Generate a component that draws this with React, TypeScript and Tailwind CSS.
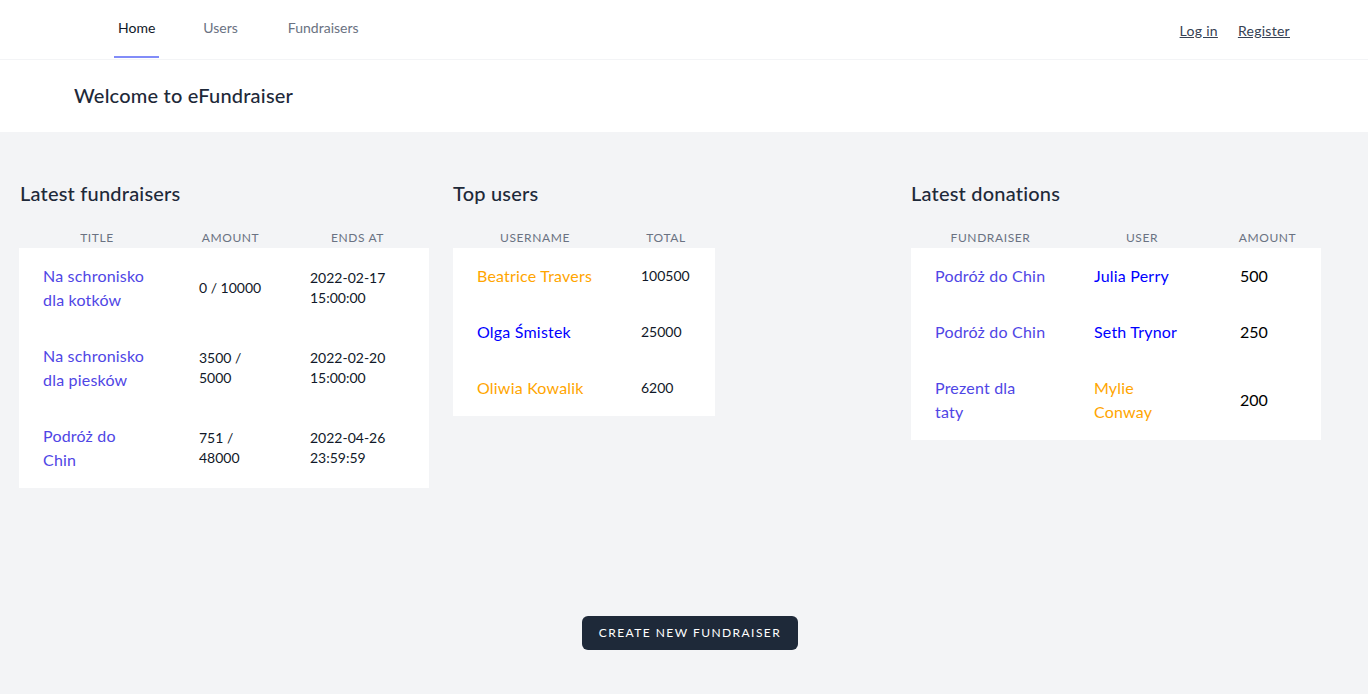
import React from "react";

const fundraisers = [
  { title: "Na schronisko dla kotków", amount: "0 / 10000", ends: "2022-02-17 15:00:00" },
  { title: "Na schronisko dla piesków", amount: "3500 / 5000", ends: "2022-02-20 15:00:00" },
  { title: "Podróż do Chin", amount: "751 / 48000", ends: "2022-04-26 23:59:59" },
];

const users = [
  { name: "Beatrice Travers", total: "100500", color: "text-[#ffa500]" },
  { name: "Olga Śmistek", total: "25000", color: "text-[#0000ff]" },
  { name: "Oliwia Kowalik", total: "6200", color: "text-[#ffa500]" },
];

const donations = [
  { fundraiser: "Podróż do Chin", user: "Julia Perry", amount: "500", color: "text-[#0000ff]" },
  { fundraiser: "Podróż do Chin", user: "Seth Trynor", amount: "250", color: "text-[#0000ff]" },
  { fundraiser: "Prezent dla taty", user: "Mylie Conway", amount: "200", color: "text-[#ffa500]" },
];

function Th({ children }: { children: React.ReactNode }) {
  return (
    <th className="px-6 py-[2px] text-xs font-normal uppercase tracking-wider text-gray-500 text-center">
      {children}
    </th>
  );
}

export default function App() {
  return (
    <div
      className="min-h-screen bg-[#f3f4f6]"
      style={{ fontFamily: "Lato, 'Noto Sans', sans-serif" }}
    >
      {/* nav */}
      <nav className="bg-white border-b border-gray-100 h-[60px] flex justify-between">
        <div className="flex h-full pl-[114px] gap-10">
          <a className="flex items-center h-[58px] px-1 border-b-2 border-[#818cf8] text-sm text-gray-900">
            Home
          </a>
          <a className="flex items-center h-[58px] px-1 border-b-2 border-transparent text-sm text-gray-500">
            Users
          </a>
          <a className="flex items-center h-[58px] px-1 ml-[2px] border-b-2 border-transparent text-sm text-gray-500">
            Fundraisers
          </a>
        </div>
        <div className="flex items-center gap-5 pr-[78px] pt-[2px]">
          <a className="text-sm text-gray-700 underline tracking-[0.02em]">Log in</a>
          <a className="text-sm text-gray-700 underline tracking-[0.02em]">Register</a>
        </div>
      </nav>

      {/* header */}
      <header className="bg-white">
        <div className="pl-[74px] pt-[21px] pb-[23px]">
          <h2 className="text-xl leading-7 font-medium text-gray-800 tracking-[0.01em]">Welcome to eFundraiser</h2>
        </div>
      </header>

      <main className="pt-[47px]">
        <div className="flex items-start pl-[19px]">
          {/* latest fundraisers */}
          <section className="w-[410px]">
            <h3 className="text-xl leading-7 font-medium text-gray-800 pl-px mb-[21px] tracking-[0.01em]">
              Latest fundraisers
            </h3>
            <table className="w-full table-fixed">
              <colgroup>
                <col className="w-[156px]" />
                <col className="w-[111px]" />
                <col />
              </colgroup>
              <thead>
                <tr>
                  <Th>Title</Th>
                  <Th>Amount</Th>
                  <Th>Ends at</Th>
                </tr>
              </thead>
              <tbody className="bg-white">
                {fundraisers.map((f) => (
                  <tr key={f.title}>
                    <td className="px-6 py-4 text-base leading-6 tracking-[0.2px] text-[#4f46e5]">{f.title}</td>
                    <td className="px-6 py-4 text-sm leading-5 text-gray-900">{f.amount}</td>
                    <td className="px-6 py-4 text-sm leading-5 text-gray-900">{f.ends}</td>
                  </tr>
                ))}
              </tbody>
            </table>
          </section>

          {/* top users */}
          <section className="w-[262px] ml-6">
            <h3 className="text-xl leading-7 font-medium text-gray-800 mb-[21px] tracking-[0.01em]">Top users</h3>
            <table className="w-full table-fixed">
              <colgroup>
                <col className="w-[164px]" />
                <col />
              </colgroup>
              <thead>
                <tr>
                  <Th>Username</Th>
                  <Th>Total</Th>
                </tr>
              </thead>
              <tbody className="bg-white">
                {users.map((u) => (
                  <tr key={u.name}>
                    <td className={`px-6 py-4 text-base leading-6 tracking-[0.2px] ${u.color}`}>{u.name}</td>
                    <td className="pl-6 py-4 text-sm leading-5 text-gray-900">{u.total}</td>
                  </tr>
                ))}
              </tbody>
            </table>
          </section>

          {/* latest donations */}
          <section className="w-[410px] ml-[196px]">
            <h3 className="text-xl leading-7 font-medium text-gray-800 mb-[21px] tracking-[0.01em]">Latest donations</h3>
            <table className="w-full table-fixed">
              <colgroup>
                <col className="w-[159px]" />
                <col className="w-[144px]" />
                <col />
              </colgroup>
              <thead>
                <tr>
                  <Th>Fundraiser</Th>
                  <Th>User</Th>
                  <Th>Amount</Th>
                </tr>
              </thead>
              <tbody className="bg-white">
                {donations.map((d, i) => (
                  <tr key={i}>
                    <td className="px-6 py-4 text-base leading-6 tracking-[0.2px] text-[#4f46e5]">{d.fundraiser}</td>
                    <td className={`px-6 py-4 text-base leading-6 tracking-[0.2px] ${d.color}`}>{d.user}</td>
                    <td className="pl-[26px] pr-6 py-4 text-base leading-6 text-black">{d.amount}</td>
                  </tr>
                ))}
              </tbody>
            </table>
          </section>
        </div>

        <div className="flex justify-center pl-3 mt-[128px]">
          <button className="px-4 py-2 bg-gray-800 border border-transparent rounded-md text-xs leading-4 font-normal text-white uppercase tracking-[0.12em]">
            Create new fundraiser
          </button>
        </div>
      </main>
    </div>
  );
}
